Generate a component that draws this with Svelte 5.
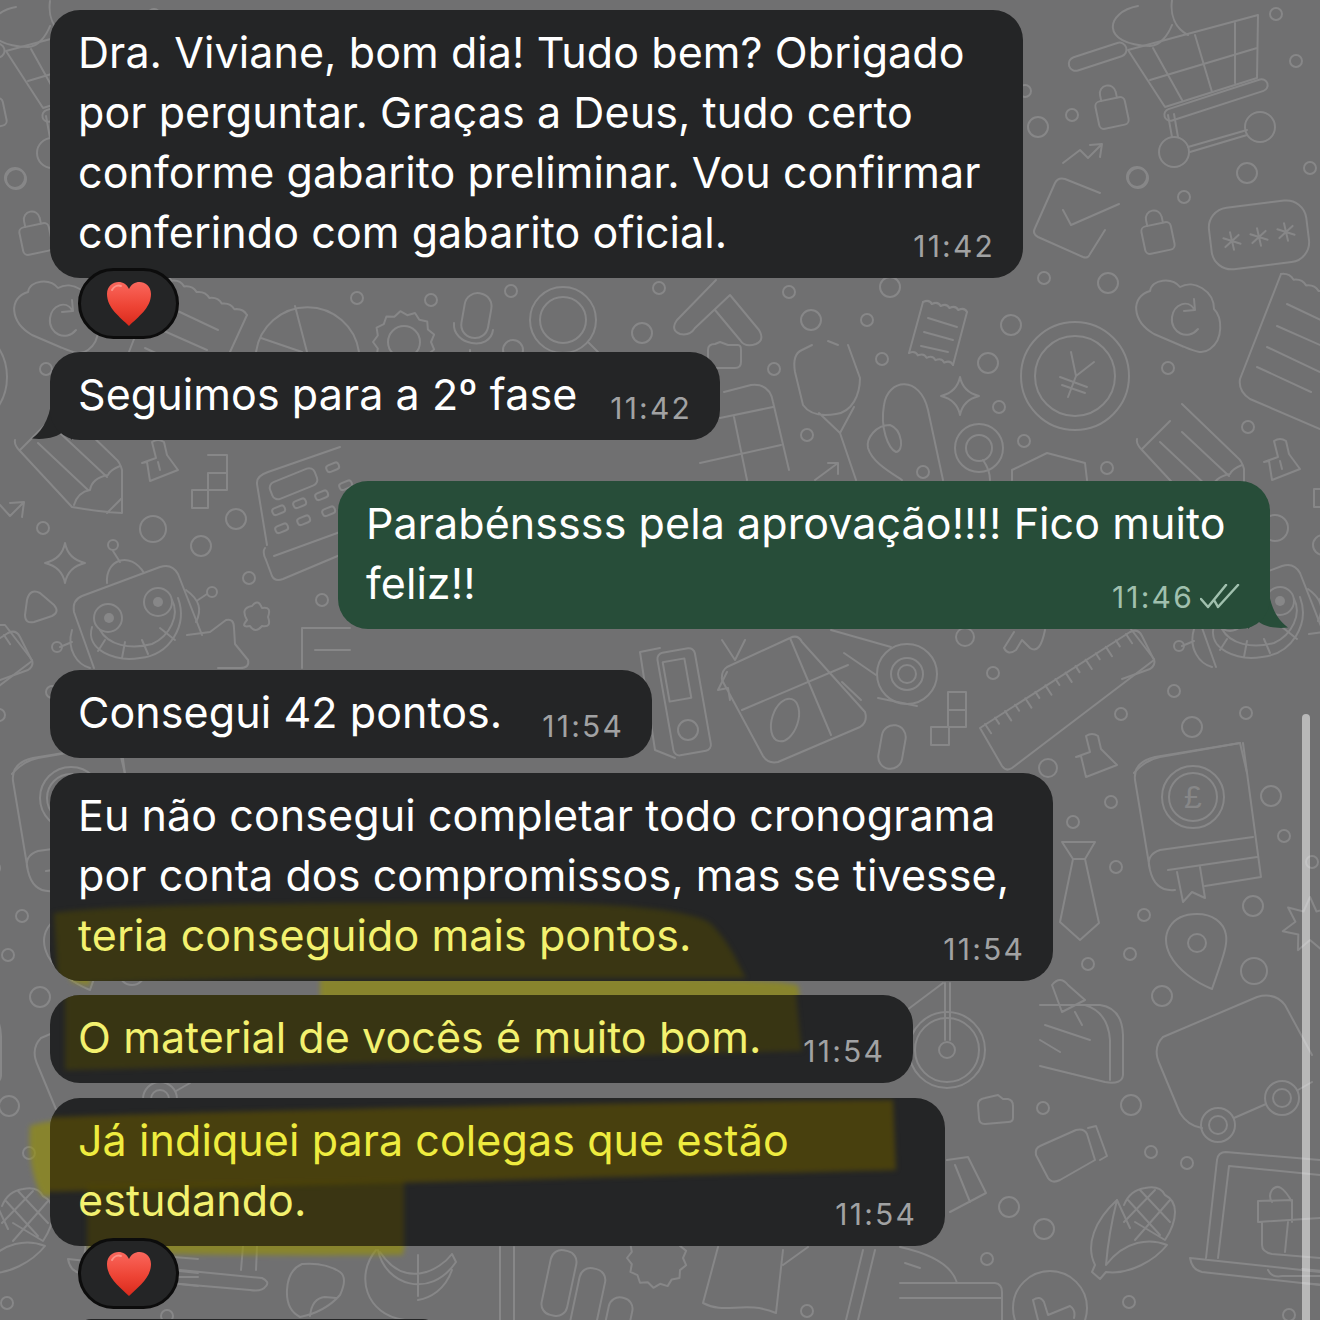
<script>
  const messages = [
    { id: 1, top: 10, width: 973, time: "11:42", lines: [["Dra. Viviane, bom dia! Tudo bem? Obrigado"], ["por perguntar. Graças a Deus, tudo certo"], ["conforme gabarito preliminar. Vou confirmar"], ["conferindo com gabarito oficial."]], reaction: true },
    { id: 2, top: 13, width: 670, time: "11:42", tail: true, lines: [["Seguimos para a 2º fase"]] },
    { id: 3, top: 41, width: 932, time: "11:46", sent: true, lines: [["Parabénssss pela aprovação!!!! Fico muito"], ["feliz!!"]] },
    { id: 4, top: 41, width: 602, time: "11:54", lines: [["Consegui 42 pontos."]] },
    { id: 5, top: 15, width: 1003, time: "11:54", lines: [["Eu não consegui completar todo cronograma"], ["por conta dos compromissos, mas se tivesse,"], ["teria conseguido mais pontos.", "soft"]],
      marks: [{ d: "M4 140 C80 130 300 130 480 130 C560 130 640 136 660 150 C680 170 685 185 696 205 L240 205 C150 205 60 210 8 212 Z", fill: "rgba(80,72,0,.5)" }] },
    { id: 6, top: 14, width: 863, time: "11:54", lines: [["O material de vocês é muito bom.", "soft"]],
      marks: [{ d: "M15 -10 L745 -10 C748 20 750 40 752 56 C500 62 250 70 15 75 Z", fill: "rgba(80,72,0,.48)" }] },
    { id: 7, top: 15, width: 895, time: "11:54", lines: [["Já indiquei para colegas que estão", "vivid"], ["estudando.", "soft"]],
      marks: [
        { d: "M-20 20 C200 12 600 4 843 2 L846 72 C600 78 250 88 -20 94 Z", fill: "rgba(95,80,0,.62)" },
        { d: "M37 87 L354 82 L354 160 L37 160 Z", fill: "rgba(80,70,0,.5)" }
      ], reaction: true, reactionGap: 8 },
    { id: 8, top: 10, width: 360, time: "", lines: [[""]], left: 27 }
  ];

  // rings scattered over the wallpaper: x, y, r
  const rings = [
    [1276,14,6],[1296,61,6],[1038,127,10],[1072,115,6],[1138,178,10],[1184,197,6],[1247,173,10],[1310,168,6],[1044,278,6],[1108,283,10],[1025,91,6],
    [789,292,6],[811,320,10],[867,320,6],[890,287,10],[1011,325,10],[774,369,6],[882,359,6],[988,363,10],[999,407,6],[1168,368,6],[807,435,6],[923,472,6],[1024,441,6],[1107,468,6],[1248,427,6],
    [43,528,6],[153,529,13],[236,519,10],[201,546,10],[249,578,6],[322,600,6],
    [1174,691,6],[1121,714,6],[1192,727,10],[1246,713,6],[993,673,6],[965,637,9],
    [357,298,6],[431,300,6],[511,291,6],[659,288,6],[642,333,10],[513,350,10],
    [1048,768,9],[1111,802,6],[1073,822,6],[1116,867,6],[1144,915,6],[1130,954,6],[1088,964,6],[1162,996,10],[1253,906,10],[1254,971,13],[1271,796,10],[1284,836,6],[1312,862,6],
    [1043,1108,6],[1131,1105,10],[1151,1152,6],[1187,1163,6],[1009,1207,10],[1044,1229,10],[987,1259,6],[1129,1302,6],[1289,1315,6],[807,1311,6],[15,178,10]
  ];

  function gear(cx, cy, r, n) {
    let d = "";
    for (let i = 0; i <= n * 2; i++) {
      const a = (i / (n * 2)) * Math.PI * 2;
      const rad = i % 2 ? r : r - 4;
      const x = (cx + Math.cos(a) * rad).toFixed(1);
      const y = (cy + Math.sin(a) * rad).toFixed(1);
      d += i === 0 ? `M${x} ${y}` : ` L${x} ${y}`;
    }
    return d + "Z";
  }

  function star(cx, cy, R, r, n) {
    let d = "";
    for (let i = 0; i < n * 2; i++) {
      const a = (i / (n * 2)) * Math.PI * 2 - Math.PI / 2;
      const rad = i % 2 ? r : R;
      d += `${i ? "L" : "M"}${(cx + Math.cos(a) * rad).toFixed(1)} ${(cy + Math.sin(a) * rad).toFixed(1)}`;
    }
    return d + "Z";
  }

  function star4(cx, cy, s) {
    return `M${cx} ${cy - s}Q${cx + 3} ${cy - 4} ${cx + s} ${cy}Q${cx + 3} ${cy + 4} ${cx} ${cy + s}Q${cx - 3} ${cy + 4} ${cx - s} ${cy}Q${cx - 3} ${cy - 4} ${cx} ${cy - s}Z`;
  }

  function wave(x1, y1, x2, y2, n) {
    let d = `M${x1} ${y1}`;
    const dx = (x2 - x1) / n;
    const dy = (y2 - y1) / n;
    for (let i = 1; i <= n; i++) {
      const x = x1 + dx * i;
      const y = y1 + dy * i;
      d += ` Q${(x - dx / 2 + 2).toFixed(1)} ${(y - dy / 2 - 4).toFixed(1)} ${x.toFixed(1)} ${y.toFixed(1)}`;
    }
    return d;
  }

  function asterisk(cx, cy, r) {
    let d = "";
    for (let i = 0; i < 3; i++) {
      const a = (i * Math.PI) / 3 + 0.3;
      d += `M${(cx - Math.cos(a) * r).toFixed(1)} ${(cy - Math.sin(a) * r).toFixed(1)}L${(cx + Math.cos(a) * r).toFixed(1)} ${(cy + Math.sin(a) * r).toFixed(1)}`;
    }
    return d;
  }

  function rulerTicks() {
    let d = "";
    for (let i = 0; i < 15; i++) {
      const t = i / 14;
      const x = 985 + (1126 - 985) * t;
      const y = 724 + (634 - 724) * t;
      const l = i % 2 ? 7 : 11;
      d += `M${x.toFixed(1)} ${y.toFixed(1)}l${(l * 0.55).toFixed(1)} ${(l * 0.85).toFixed(1)}`;
    }
    return d;
  }

  const calcKeys = [[278,510],[299,503],[321,495],[281,528],[303,520],[328,511],[332,467],[345,485]];

  const lines = [
    // cart
    "M1128 50L1258 15L1257 78M1128 50L1165 107L1257 78M1153 48L1182 100M1195 35L1212 92M1235 23V83M1150 80L1257 48",
    "M1168 115L1172 137M1174 114L1178 137M1188 147L1247 130M1190 152L1247 135",
    "M1138 6C1105 12 1100 45 1150 46C1160 46 1168 35 1172 25M1172 0C1170 15 1175 28 1188 35",
    // arrow up
    "M1063 163L1080 150L1088 158L1101 145M1090 145L1102 144L1100 157",
    // check box
    "M1100 193L1065 179Q1058 177 1055 183L1035 228Q1032 234 1038 237L1083 257Q1088 259 1090 254L1105 230M1063 210L1071 225L1119 204",
    // cloud with refresh
    "M32 335C10 322 8 298 28 292C30 280 50 278 58 288C72 280 92 292 92 310C100 318 102 340 88 350C80 356 72 352 60 347L32 335Z",
    "M72 310C66 300 52 305 50 318C48 334 66 342 76 330M72 300L73 311L62 312",
    // receipt
    "M159 275L118 380Q116 392 128 400L198 430",
    wave(159, 275, 247, 315, 7),
    "M165 305L218 330M155 327L207 350M145 348L198 373M135 368L189 393M247 315L230 352",
    // pie, gear, mic, magnifier
    "M256 352A52 52 0 0 1 359 352M295 306L307 352M261 338L302 352",
    gear(404, 342, 31, 13),
    "M454 323C452 345 490 352 493 330M470 350V354",
    "M588 342L598 352",
    "M716 280L677 320Q670 330 680 334Q690 336 695 328L730 295L759 330Q765 340 756 344Q745 348 740 340L715 310",
    // plug, top-left tile
    "M142 463L156 458L152 442Q158 438 164 442L167 455L178 470L150 481L147 462L142 463ZM158 462L160 470",
    // tetris
    "M208 455H227V490H208V473H227M208 473V508H192V490H208",
    // calculator
    "M340 447L268 472Q256 476 257 484L267 545M265 548Q262 552 266 560L272 576Q275 582 283 579L340 555M274 556L340 532",
    // pencil
    "M15 440Q14 445 20 451L72 507Q100 512 122 513V470Q120 462 115 458L60 405M38 443L88 490M60 433L107 477M120 466Q110 470 108 475Q92 478 90 490Q78 492 74 505M107 513L122 498M20 450L48 422",
    // arrow left strip
    "M0 505L10 516L22 504M10 503L24 502L22 517",
    // robot
    "M94 668L74 612Q72 600 82 596L160 567Q172 563 178 574L202 635M107 583C105 560 130 550 144 573M113 551L120 562",
    "M92 627C85 650 115 662 140 658C170 655 188 625 178 598M100 630C108 645 130 650 152 644C170 636 180 615 172 600M105 640L98 651M125 642L122 658M142 640L148 654M160 628L175 640M72 630C66 650 78 665 90 668M60 647L72 642M186 590C200 600 202 610 196 622M198 600L207 594",
    // star shape + triangle + tile
    "M187 635L210 632L226 620Q234 618 234 628L235 644L248 660Q250 668 240 668H218",
    "M27 600Q30 588 40 593L54 605Q60 612 52 616L34 622Q25 624 25 615Z",
    "M0 625H5L32 660Q34 666 28 670L0 680",
    "M302 668V628H350M315 650H350",
    // small receipt
    wave(923, 302, 967, 312, 5),
    wave(909, 353, 953, 365, 5),
    "M923 302L909 353M967 312L953 365M928 318L957 327M924 332L953 340M921 346L948 352",
    // stethoscope
    "M802 350Q792 354 795 372L803 405Q812 418 836 414C852 412 860 395 860 378L848 345M819 413L840 433L856 480M854 407L840 433M812 345L802 350M828 341L838 345",
    // long shape
    "M943 480L928 410C920 375 888 378 884 405C880 428 888 448 896 452C904 452 903 430 890 425C876 425 866 438 868 448C872 462 890 472 902 480",
    // table
    "M724 392L751 385Q770 383 773 402L789 470M720 418L773 407M700 463L781 445M734 417L747 480",
    "M708 350Q708 344 715 344L720 342L728 345H738Q741 345 741 350V362Q741 368 735 368H715Q708 368 708 362Z",
    "M1012 480V470L1047 453L1085 463L1087 480M815 480L838 463M828 463H838V474",
    // star
    star4(960, 396, 19),
    star4(65, 563, 20),
    // yen
    "M1071 352L1076 376L1068 397M1094 362L1076 376M1060 377L1087 387M1062 385L1085 393",
    "M983 460Q990 470 990 480",
    // card with tabs
    "M660 648L640 652L655 750L675 758",
    // gift box
    "M727 667L790 638Q798 634 802 642L865 712Q868 722 860 727L778 762Q768 764 763 756L722 680Q721 671 727 667ZM790 638L831 735M742 710L848 665M727 672L718 690L728 688L730 700M722 640L735 660L745 640",
    // tape
    "M831 630L891 647M844 653L876 675M878 698L917 706M842 682L861 700",
    // chevron
    "M1004 648L1014 632M1004 648Q1008 656 1016 650L1022 640L1030 648Q1040 655 1045 630",
    // ruler
    "M980 728L1130 632Q1138 628 1142 636L1154 660L1012 768Q1006 772 1002 766Z",
    rulerTicks(),
    // plug 2
    "M1076 757L1090 752L1086 736Q1092 732 1098 736L1101 749L1117 765L1086 777L1081 756Z",
    "M1134 773Q1145 760 1160 757L1240 743L1247 773",
    // book
    "M1243 743L1261 877L1205 886M1240 743L1155 757Q1133 762 1135 780L1150 870Q1155 892 1175 890M1160 850L1253 837M1160 850Q1145 855 1150 870M1168 870L1257 857",
    "M1177 872L1183 902L1192 892L1205 898L1200 867",
    // tie
    "M1062 842H1095L1085 859H1073L1062 842M1073 859L1060 922L1080 940L1099 923L1085 859",
    // pin
    "M1197 914C1170 914 1160 935 1170 955C1178 970 1195 982 1212 989C1222 960 1228 945 1226 935C1224 922 1212 914 1197 914Z",
    star(1310, 925, 28, 15, 7),
    // perfume
    "M1052 985Q1060 975 1068 985L1085 1000L1062 1012L1052 985ZM1075 1012L1082 1025M1040 1005H1100Q1122 1008 1123 1035V1075Q1122 1085 1105 1082L1040 1066M1085 1005Q1108 1012 1110 1040V1080M1045 1025L1090 1040",
    "M1040 1040L1060 1052",
    // big rounded + nodes
    "M1163 1037L1257 997Q1275 992 1285 1005L1312 1055M1163 1037Q1152 1048 1160 1065L1180 1113Q1188 1126 1202 1128",
    "M1234 1118L1266 1104M1298 1090L1312 1082",
    // wheel
    "M945 983V1040M950 983V1040M907 1010L943 983",
    // folder
    "M978 1105Q978 1099 985 1098L998 1095L1003 1099H1008Q1013 1100 1013 1106V1118Q1013 1122 1008 1122L985 1124Q979 1124 979 1118Z",
    // jar
    "M1040 1146L1076 1130Q1084 1128 1087 1134L1095 1160L1060 1180Q1052 1184 1048 1178L1036 1155Q1035 1148 1040 1146ZM1088 1128L1096 1126L1107 1156L1100 1160",
    // gift behind
    "M947 1160L968 1157L986 1193L950 1212M955 1165L970 1202",
    // corn
    "M1117 1200C1095 1220 1085 1245 1095 1265L1092 1272L1100 1279L1106 1272C1130 1275 1155 1260 1167 1245C1150 1238 1125 1240 1106 1265C1108 1240 1112 1220 1117 1200ZM1117 1200L1130 1228",
    "M1124 1205Q1130 1190 1145 1188Q1160 1185 1165 1195Q1175 1200 1175 1212Q1175 1225 1165 1240L1135 1222M1128 1200L1160 1235M1140 1190L1170 1222M1124 1222L1155 1190M1135 1240L1170 1200",
    // laptop
    "M1206 1258L1217 1160Q1218 1152 1226 1152L1320 1160M1218 1258L1229 1166L1320 1175M1190 1258L1320 1272M1190 1258Q1192 1270 1202 1272L1320 1285M1268 1270Q1272 1278 1282 1276H1320",
    "M1258 1201L1292 1200V1222M1258 1201V1222L1320 1218M1292 1202Q1280 1180 1272 1190Q1268 1196 1272 1202M1262 1222V1245Q1262 1252 1272 1254L1320 1258M1288 1222L1285 1252",
    // clock
    "M1033 1300L1038 1320M1033 1300Q1040 1295 1044 1302L1048 1315L1070 1306Q1076 1310 1074 1318",
    // wallet
    "M900 1247Q950 1258 957 1283M900 1283H995Q1002 1284 1002 1292V1320M900 1298H1002M905 1263L920 1268",
    // lamp + blob + banana
    "M243 1246L241 1270M257 1246L256 1270M180 1270L262 1278Q270 1282 266 1286Q262 1292 250 1290L180 1284",
    "M302 1264Q288 1270 287 1290Q286 1310 300 1317Q325 1312 340 1295Q348 1278 340 1272Q325 1262 302 1264ZM310 1316Q312 1298 325 1297L336 1298",
    "M376 1250C355 1275 365 1315 405 1320M378 1250C385 1285 430 1300 456 1262L452 1254C440 1270 405 1290 380 1252M418 1300C430 1298 445 1290 452 1270M418 1255V1296",
    "M500 1247V1320M514 1247V1320",
    gear(657, 1258, 30, 13),
    "M718 1247L703 1303C725 1315 745 1300 776 1313L783 1250M783 1265L808 1247",
    "M863 1250L846 1320M875 1250L858 1320"
  ];
</script>

<div class="page">
  <svg class="wallpaper" width="1320" height="1320" aria-hidden="true">
    <defs>
      <filter id="soft" x="-10%" y="-30%" width="120%" height="160%">
        <feGaussianBlur stdDeviation="2.500" />
      </filter>
      <g id="tile">
        {#each lines as d}
          <path {d} />
        {/each}
        {#each rings as [cx, cy, r]}
          <circle {cx} {cy} {r} />
        {/each}

        <rect x="1068" y="50" width="60" height="14" rx="7" transform="rotate(-18 1097 58)" />
        <rect x="1162" y="94" width="108" height="12" rx="6" transform="rotate(-18 1216 100)" />
        <circle cx="1174" cy="152" r="15" />
        <circle cx="1260" cy="127" r="15" />

        <g transform="translate(1112 113) rotate(-12)">
          <rect x="-15" y="-14" width="30" height="28" rx="5" />
          <path d="M-8 -14V-20A8 8 0 0 1 8 -20V-14" />
        </g>
        <g transform="translate(1158 238) rotate(-12)">
          <rect x="-15" y="-14" width="30" height="28" rx="5" />
          <path d="M-8 -14V-20A8 8 0 0 1 8 -20V-14" />
        </g>

        <rect x="1210" y="204" width="98" height="62" rx="20" transform="rotate(-7 1258 235)" />
        <path d={asterisk(1232, 241, 9)} />
        <path d={asterisk(1259, 237, 9)} />
        <path d={asterisk(1286, 232, 9)} />

        <circle cx="404" cy="342" r="16" />
        <rect x="463" y="293" width="27" height="45" rx="13" transform="rotate(10 476 315)" />
        <circle cx="563" cy="320" r="33" />
        <circle cx="563" cy="320" r="23" />

        <rect x="269" y="476" width="48" height="18" rx="6" transform="rotate(-22 290 483)" />
        {#each calcKeys as [x, y]}
          <rect x={x - 6} y={y - 3} width="13" height="7" rx="3" transform="rotate(-22 {x} {y})" />
        {/each}

        <circle cx="113" cy="545" r="5" />
        <circle cx="108" cy="618" r="14" />
        <circle cx="158" cy="602" r="14" />
        <circle class="solid" cx="109" cy="618" r="5" />
        <circle class="solid" cx="158" cy="602" r="5" />
        <circle cx="57" cy="647" r="5" />
        <circle cx="212" cy="592" r="5" />
        <path d="M247 620Q240 608 252 606Q258 598 262 608Q272 606 268 617Q272 628 262 626Q255 634 250 626Q240 628 247 620Z" />

        <circle cx="979" cy="448" r="24" />
        <circle cx="979" cy="448" r="13" />
        <circle cx="1075" cy="376" r="54" />
        <circle cx="1075" cy="376" r="40" />

        <rect x="665" y="650" width="38" height="104" rx="6" transform="rotate(-10 683 701)" />
        <rect x="666" y="660" width="22" height="40" transform="rotate(-10 677 680)" />
        <circle cx="688" cy="730" r="10" />

        <ellipse cx="785" cy="720" rx="13" ry="22" transform="rotate(18 785 720)" />
        <circle cx="907" cy="674" r="30" />
        <circle cx="907" cy="674" r="16" />
        <circle cx="907" cy="674" r="9" />

        <rect x="880" y="725" width="24" height="44" rx="12" transform="rotate(10 892 747)" />
        <path d="M948 692H966V727H948ZM948 710H966M931 727H949V745H931Z" />

        <circle cx="1193" cy="797" r="31" />
        <circle cx="1193" cy="797" r="24" />
        <text class="pound" x="1193" y="808" text-anchor="middle">£</text>

        <circle cx="947" cy="1050" r="38" />
        <circle cx="947" cy="1050" r="32" />
        <circle cx="947" cy="1050" r="8" />
        <circle cx="1218" cy="1125" r="17" />
        <circle cx="1218" cy="1125" r="9" />
        <circle cx="1282" cy="1098" r="17" />
        <circle cx="1282" cy="1098" r="9" />
        <circle cx="1197" cy="943" r="9" />
        <circle cx="1050" cy="1308" r="37" />

        <rect x="546" y="1250" width="26" height="66" rx="11" transform="rotate(12 559 1283)" />
        <rect x="575" y="1268" width="26" height="66" rx="11" transform="rotate(12 588 1300)" />
        <rect x="604" y="1297" width="24" height="66" rx="11" transform="rotate(12 616 1330)" />
      </g>
    </defs>

    <use href="#tile" />
    <use href="#tile" transform="translate(1122 -1)" />
    <use href="#tile" transform="translate(-1122 1)" />

    <!-- yellow marker where it runs past the bubbles -->
    <g class="marker" filter="url(#soft)">
      <path d="M55 950L90 950L90 986L72 982Z" />
      <path d="M320 978C450 975 680 975 780 982L798 985L800 1000L320 1000Z" />
      <path d="M30 1126C40 1122 60 1120 60 1120L60 1196L42 1196C32 1180 28 1150 30 1126Z" />
      <path d="M87 1240H405L403 1255C300 1256 180 1255 90 1252Z" />
    </g>
  </svg>

  <main class="chat">
    {#each messages as m (m.id)}
      <div class="row" class:out={m.sent} style="margin-top: {m.top}px; margin-left: {m.sent ? 338 : 50 + (m.left || 0)}px; width: {m.width}px">
        {#if m.tail}
          <svg class="tail in" width="40" height="50" viewBox="0 0 40 50" aria-hidden="true">
            <path d="M20 0C20 24 12 40 0 48.5C14 50 26 47 32 41L40 50L40 0Z" />
          </svg>
        {/if}
        {#if m.sent}
          <svg class="tail sent" width="40" height="50" viewBox="0 0 40 50" aria-hidden="true">
            <path d="M20 0C20 24 28 40 40 48.5C26 50 14 47 9 41L0 50L0 0Z" />
          </svg>
        {/if}
        <div class="bubble" class:sent={m.sent}>
          {#if m.marks}
            <svg class="mark" width={m.width} height="220" aria-hidden="true">
              {#each m.marks as mark}
                <path d={mark.d} fill={mark.fill} />
              {/each}
            </svg>
          {/if}
          <div class="text">
            {#each m.lines as [line, tone]}
              <div class="line {tone || ''}">{line}</div>
            {/each}
          </div>
          {#if m.time}
            <div class="meta">
              <span class="time">{m.time}</span>
              {#if m.sent}
                <svg class="ticks" width="40" height="26" viewBox="0 0 40 26" aria-hidden="true">
                  <path d="M1 15L8 23L26 1M18 23L38 1M14 16L18 23" />
                </svg>
              {/if}
            </div>
          {/if}
        </div>
      </div>
      {#if m.reaction}
        <div class="reaction" class:tight={m.reactionGap}>
          <svg width="46" height="46" viewBox="0 0 46 46" aria-hidden="true">
            <defs>
              <linearGradient id="heart-{m.id}" x1="0" y1="0" x2="0" y2="1">
                <stop offset="0" stop-color="#f9675c" />
                <stop offset="0.55" stop-color="#ee4435" />
                <stop offset="1" stop-color="#d92a1c" />
              </linearGradient>
            </defs>
            <path d="M23 45C14 36 1 27 1 13C1 5 7 1 12.500 1C17 1 21 3.500 23 8C25 3.500 29 1 33.500 1C39 1 45 5 45 13C45 27 32 36 23 45Z" fill="url(#heart-{m.id})" />
            <path d="M6 9C8 5 12 4 15 5" fill="none" stroke="#ffa79d" stroke-width="2" stroke-linecap="round" opacity=".7" />
          </svg>
        </div>
      {/if}
    {/each}
  </main>

  <div class="scrollbar"></div>
</div>

<style>
  :global(body) {
    margin: 0;
    background: #707071;
  }

  .page {
    position: relative;
    width: 1320px;
    height: 1320px;
    overflow: hidden;
    background: #707071;
    font-family: Inter, "Liberation Sans", sans-serif;
  }

  .wallpaper {
    position: absolute;
    inset: 0;
    fill: none;
    stroke: #878788;
    stroke-width: 2;
    stroke-linecap: round;
    stroke-linejoin: round;
  }

  .wallpaper :global(.solid) {
    fill: #878788;
    stroke: none;
  }

  .wallpaper :global(.pound) {
    fill: #878788;
    stroke: none;
    font-family: "Liberation Sans", sans-serif;
    font-size: 32px;
  }

  .marker {
    fill: rgba(152, 146, 0, 0.6);
    stroke: none;
  }

  .chat {
    position: relative;
    display: flex;
    flex-direction: column;
    align-items: flex-start;
  }

  .row {
    position: relative;
  }

  .bubble {
    position: relative;
    display: flex;
    flex-direction: column;
    overflow: hidden;
    box-sizing: border-box;
    width: 100%;
    height: auto;
    padding: 12px 30px 16px 28px;
    border-radius: 30px;
    background: #242526;
    color: #fff;
  }

  .bubble.sent {
    background: #274d39;
  }

  .mark {
    position: absolute;
    left: 0;
    top: 0;
    overflow: visible;
    filter: blur(2.500px);
  }

  .text {
    position: relative;
    font-size: 43px;
    letter-spacing: 0.08px;
    line-height: 60px;
    white-space: nowrap;
  }

  .line.soft {
    color: #f3f16f;
  }

  .line.vivid {
    color: #efec3f;
  }

  .meta {
    position: relative;
    top: 1px;
    display: flex;
    align-items: center;
    align-self: flex-end;
    gap: 6px;
    height: 34px;
    margin-top: -34px;
    margin-right: -2px;
    font-size: 30px;
    letter-spacing: 2.200px;
    color: #a1a2a3;
  }

  .sent .meta {
    margin-right: 0;
    color: #a0c0ae;
  }

  .ticks {
    fill: none;
    stroke: #a0c0ae;
    stroke-width: 2.500;
    stroke-linecap: round;
    stroke-linejoin: round;
  }

  .tail {
    position: absolute;
    bottom: 0;
  }

  .tail.in {
    left: -18px;
    fill: #242526;
  }

  .tail.sent {
    right: -18px;
    bottom: 0;
    fill: #274d39;
  }

  .reaction {
    position: relative;
    display: flex;
    align-items: center;
    justify-content: center;
    box-sizing: border-box;
    width: 101px;
    height: 71px;
    margin: -10px 0 0 78px;
    border: 3px solid #0c0c0c;
    border-radius: 36px;
    background: #242526;
  }

  .reaction.tight {
    margin-top: -8px;
  }

  .scrollbar {
    position: absolute;
    top: 714px;
    right: 10px;
    bottom: -10px;
    width: 8px;
    border-radius: 4px;
    background: rgba(255, 255, 255, 0.5);
  }
</style>
